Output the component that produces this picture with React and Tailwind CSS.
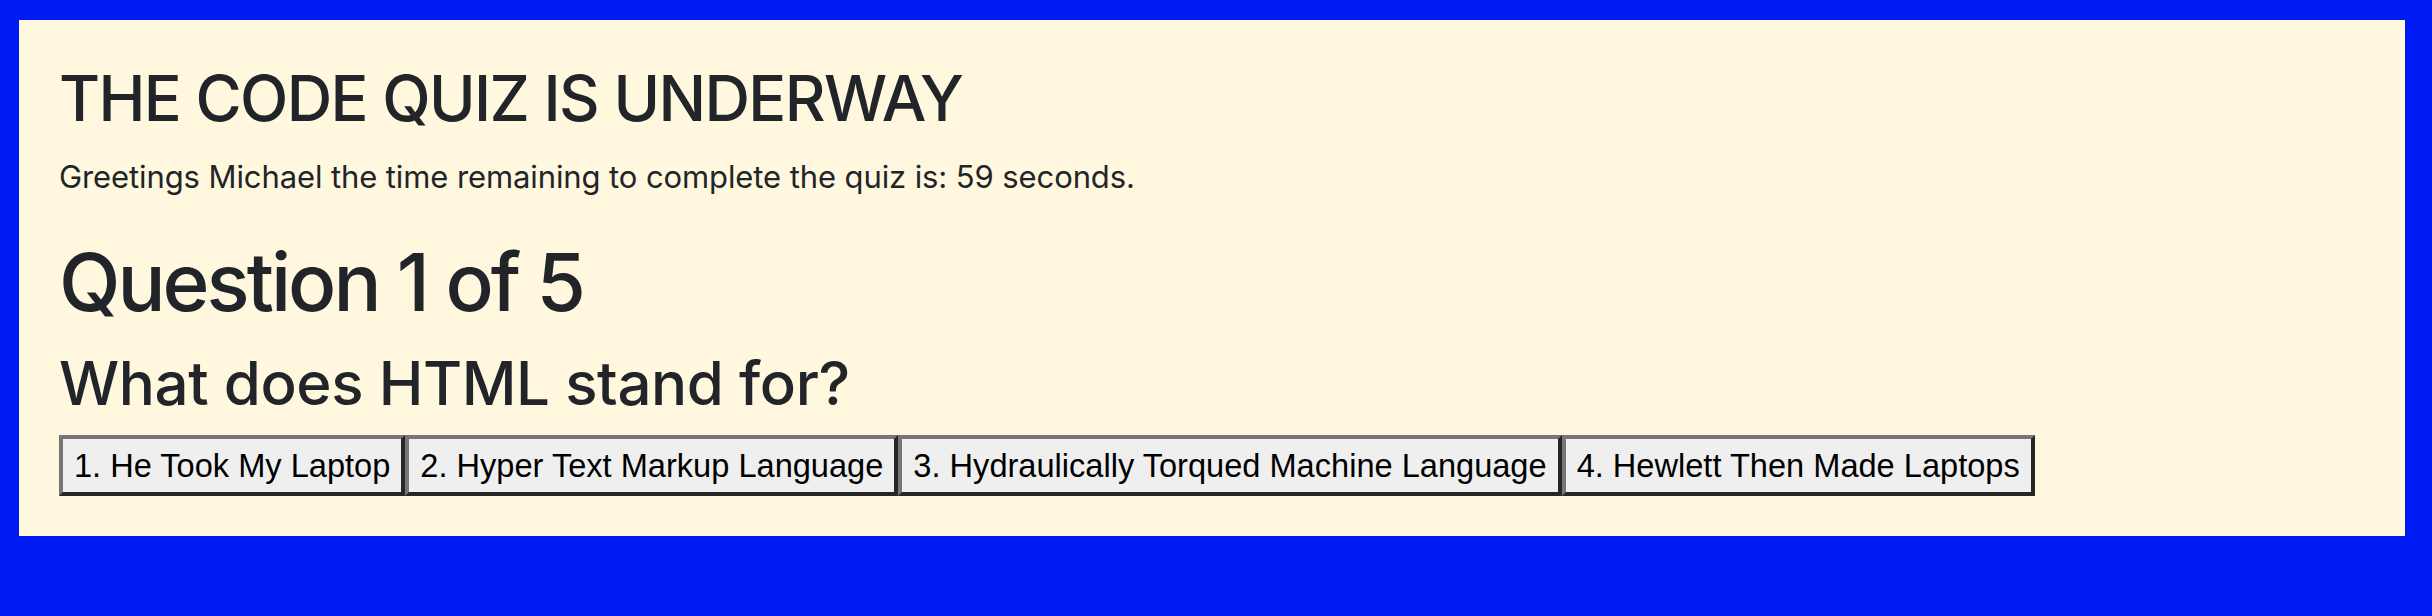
export default function App() {
  const answers = [
    "1. He Took My Laptop",
    "2. Hyper Text Markup Language",
    "3. Hydraulically Torqued Machine Language",
    "4. Hewlett Then Made Laptops",
  ];
  return (
    <div className="min-h-[616px] w-full bg-[#001cf5] pt-[20px] pl-[19px]">
      <div
        className="w-[2386px] h-[516px] bg-[#fff8de] pl-[40px] pt-[41px] text-[#212529]"
        style={{ fontFamily: "Inter, 'Noto Sans', sans-serif" }}
      >
        <h2 className="text-[63px] leading-[1.2] font-medium tracking-[-1.6px]">THE CODE QUIZ IS UNDERWAY</h2>
        <p className="mt-[17px] text-[31px] leading-[1.5] tracking-[-0.1px]">
          Greetings Michael the time remaining to complete the quiz is: 59 seconds.
        </p>
        <h1 className="mt-[34px] text-[80px] leading-[1.2] font-medium tracking-[-3px]">Question 1 of 5</h1>
        <h3 className="mt-[17px] text-[60px] leading-[1.2] font-medium tracking-[-0.4px]">What does HTML stand for?</h3>
        <div className="mt-[16px] flex">
          {answers.map((a) => (
            <button
              key={a}
              className="h-[61px] px-[11px] bg-[#efefef] text-black text-[32.6px] leading-[1.15] border-4 border-t-[#767676] border-l-[#767676] border-b-[#262626] border-r-[#262626]"
              style={{ fontFamily: "'Liberation Sans', Arial, sans-serif" }}
            >
              {a}
            </button>
          ))}
        </div>
      </div>
    </div>
  );
}
